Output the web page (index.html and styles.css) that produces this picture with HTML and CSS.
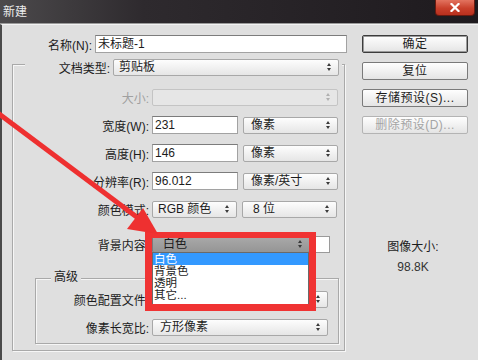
FILE: index.html
```html
<!DOCTYPE html>
<html lang="zh-CN">
<head>
<meta charset="utf-8">
<title>新建</title>
<link rel="stylesheet" href="styles.css">
</head>
<body>
<div class="win">
  <div class="titlebar">
    <span class="title">新建</span>
    <span class="close"><svg width="12" height="9" viewBox="0 0 12 9"><path d="M2.5 1 L9.5 8 M9.5 1 L2.5 8" stroke="#fff" stroke-width="2.2" stroke-linecap="square"/></svg></span>
  </div>
  <div class="body">
    <div class="left">
      <div class="row row-name">
        <span class="lbl lbl-name">名称(N):</span>
        <span class="field w-name">未标题-1</span>
      </div>
      <div class="group">
        <div class="group-head">
          <span class="lbl lbl-doc">文档类型:</span>
          <span class="select w-doc pad-s">剪贴板</span>
        </div>
        <div class="row row-first">
          <span class="lbl lbl-main dis">大小:</span>
          <span class="select disabled w-full"></span>
        </div>
        <div class="row">
          <span class="lbl lbl-main">宽度(W):</span>
          <span class="field w-num">231</span>
          <span class="select w-unit">像素</span>
        </div>
        <div class="row">
          <span class="lbl lbl-main">高度(H):</span>
          <span class="field w-num">146</span>
          <span class="select w-unit">像素</span>
        </div>
        <div class="row">
          <span class="lbl lbl-main">分辨率(R):</span>
          <span class="field w-num">96.012</span>
          <span class="select w-unit">像素/英寸</span>
        </div>
        <div class="row">
          <span class="lbl lbl-main">颜色模式:</span>
          <span class="select w-mode pad-s">RGB 颜色</span>
          <span class="select w-unit pad-l">8 位</span>
        </div>
        <div class="row row-bg">
          <span class="lbl lbl-main">背景内容:</span>
          <span class="select open w-bg pad-l">白色
            <span class="dropdown">
              <span class="opt sel">白色</span>
              <span class="opt">背景色</span>
              <span class="opt">透明</span>
              <span class="opt">其它...</span>
            </span>
          </span>
          <span class="swatch"></span>
        </div>
        <div class="group adv">
          <div class="adv-head">高级</div>
          <div class="row row-adv1">
            <span class="lbl lbl-adv">颜色配置文件:</span>
            <span class="select w-adv"></span>
          </div>
          <div class="row">
            <span class="lbl lbl-adv">像素长宽比:</span>
            <span class="select w-adv">方形像素</span>
          </div>
        </div>
      </div>
    </div>
    <div class="right">
      <span class="btn default">确定</span>
      <span class="btn">复位</span>
      <span class="btn">存储预设(S)...</span>
      <span class="btn off">删除预设(D)...</span>
      <div class="imgsize">
        <div class="is-label">图像大小:</div>
        <div class="is-value">98.8K</div>
      </div>
    </div>
  </div>
  <div class="mark"></div>
  <svg class="arrow" width="478" height="360" viewBox="0 0 478 360">
    <line x1="-6" y1="110" x2="140" y2="219.5" stroke="#ee3030" stroke-width="5"/>
    <polygon points="158,234 127,229 143,208" fill="#ee3030"/>
  </svg>
</div>
</body>
</html>
```

FILE: styles.css
```css
* { box-sizing: border-box; }
html, body { margin: 0; padding: 0; }
body {
  width: 478px;
  height: 360px;
  overflow: hidden;
  font-family: "Liberation Sans", "Noto Sans CJK SC", sans-serif;
  font-size: 12px;
  color: #1c1c1c;
}
.win {
  position: relative;
  width: 478px;
  height: 360px;
  display: flex;
  flex-direction: column;
  background: #dfdfdf;
}
.titlebar {
  height: 24px;
  flex: none;
  display: flex;
  align-items: flex-start;
  justify-content: space-between;
  background: linear-gradient(90deg, #4c4a4c 0%, #2e2a2e 30%, #1e1a1e 100%);
  border-bottom: 1px solid #9a9a9a;
}
.title {
  color: #ececec;
  line-height: 14px;
  margin: 5px 0 0 3px;
}
.close {
  width: 40px;
  height: 16px;
  margin-right: 3px;
  display: flex;
  align-items: center;
  justify-content: center;
  background: linear-gradient(#e2735f, #c9402b 55%, #b8301e);
  border: 1px solid #6a1a10;
  border-top: none;
  border-radius: 0 0 4px 4px;
}
.body {
  flex: 1;
  display: flex;
  border-left: 2px solid #4a4a4a;
  border-top: 1px solid #f2f2f2;
}
.left {
  width: 348px;
  padding-top: 10px;
}
.row {
  display: flex;
  align-items: center;
  gap: 3px;
  height: 18px;
  margin-top: 10px;
}
.row-name { margin-top: 0; }
.lbl {
  text-align: right;
  white-space: nowrap;
  flex: none;
}
.lbl.dis { color: #a0a0a0; }
.lbl-name { width: 90px; }
.lbl-doc { width: 85px; }
.lbl-main { width: 136px; }
.lbl-adv { width: 113px; }
.field {
  height: 18px;
  background: #fff;
  border: 1px solid #a2a2a2;
  border-top-color: #7c7c7c;
  padding-left: 2px;
  line-height: 16px;
  white-space: nowrap;
  flex: none;
}
.w-name { width: 252px; padding-left: 2px; }
.w-num { width: 86px; }
.select {
  position: relative;
  height: 17px;
  background: linear-gradient(#fdfdfd, #efefef 60%, #e6e6e6);
  border: 1px solid #a8a8a8;
  border-radius: 2px;
  padding-left: 7px;
  line-height: 15px;
  white-space: nowrap;
  flex: none;
}
.select::before, .select::after {
  content: "";
  position: absolute;
  right: 7px;
  width: 0;
  height: 0;
  border-left: 2.5px solid transparent;
  border-right: 2.5px solid transparent;
}
.select::before { top: 3px; border-bottom: 3px solid #3a3a3a; }
.select::after { top: 8px; border-top: 3px solid #3a3a3a; }
.select.disabled { background: #e6e6e6; border-color: #c4c4c4; }
.select.disabled::before { border-bottom-color: #b0b0b0; }
.select.disabled::after { border-top-color: #b0b0b0; }
.pad-s { padding-left: 5px; }
.pad-l { padding-left: 10px; }
.w-doc { width: 226px; }
.w-full { width: 186px; }
.w-unit { width: 95px; margin-left: 2px; }
.w-mode { width: 85px; }
.w-bg { width: 158px; }
.w-adv { width: 176px; }
.group {
  margin: 11px 0 0 10px;
  width: 333px;
  border: 1px solid #a9a9a9;
  box-shadow: inset 1px 1px 0 #f6f6f6, 1px 1px 0 #f6f6f6;
  padding-bottom: 6px;
}
.group-head {
  display: flex;
  align-items: center;
  gap: 3px;
  width: fit-content;
  height: 17px;
  margin: -6px 0 0 12px;
  padding-right: 3px;
  background: #dfdfdf;
}
.row-first { margin-top: 12px; }
.row-bg { height: 17px; margin-top: 18px; }
.open {
  background: linear-gradient(#a9a9a9, #959595);
  border-color: #7a7a7a;
}
.dropdown {
  position: absolute;
  z-index: 5;
  left: -1px;
  top: 15px;
  width: 157px;
  background: #fff;
  border: 1px solid #6a6a6a;
  display: flex;
  flex-direction: column;
  padding-bottom: 4px;
}
.opt {
  height: 12px;
  line-height: 12px;
  font-size: 11.5px;
  padding-left: 1px;
  overflow: visible;
}
.opt.sel { background: #3399ff; color: #fff; }
.swatch {
  width: 15px;
  height: 17px;
  margin-left: 2px;
  background: #fff;
  border: 1px solid #9a9a9a;
}
.adv {
  margin: 25px 0 0 22px;
  width: 304px;
  padding-bottom: 7px;
}
.adv-head {
  width: fit-content;
  height: 14px;
  line-height: 14px;
  margin: -9px 0 0 15px;
  padding: 0 3px;
  background: #dfdfdf;
}
.row-adv1 { height: 17px; margin-top: 7px; }
.right {
  width: 106px;
  margin-left: 12px;
  padding-top: 10px;
  display: flex;
  flex-direction: column;
  gap: 9px;
}
.btn {
  height: 18px;
  line-height: 16px;
  text-align: center;
  background: linear-gradient(#fefefe, #f0f0f0 55%, #e4e4e4);
  border: 1px solid #7a7a7a;
  border-radius: 2px;
  letter-spacing: 0.5px;
}
.btn.default {
  border-color: #3c3c3c;
  box-shadow: inset 0 0 0 1px #9a9a9a;
}
.btn.off { color: #a4a4a4; border-color: #b4b4b4; }
.imgsize {
  margin-top: 97px;
  text-align: center;
  padding-right: 4px;
}
.is-label { line-height: 14px; }
.is-value { line-height: 14px; margin-top: 6px; color: #333; }
.mark {
  position: absolute;
  z-index: 10;
  left: 145px;
  top: 232px;
  width: 171px;
  height: 79px;
  border: 7px solid #f03333;
  border-top-width: 6px;
}
.arrow {
  position: absolute;
  z-index: 11;
  left: 0;
  top: 0;
  pointer-events: none;
}
```
